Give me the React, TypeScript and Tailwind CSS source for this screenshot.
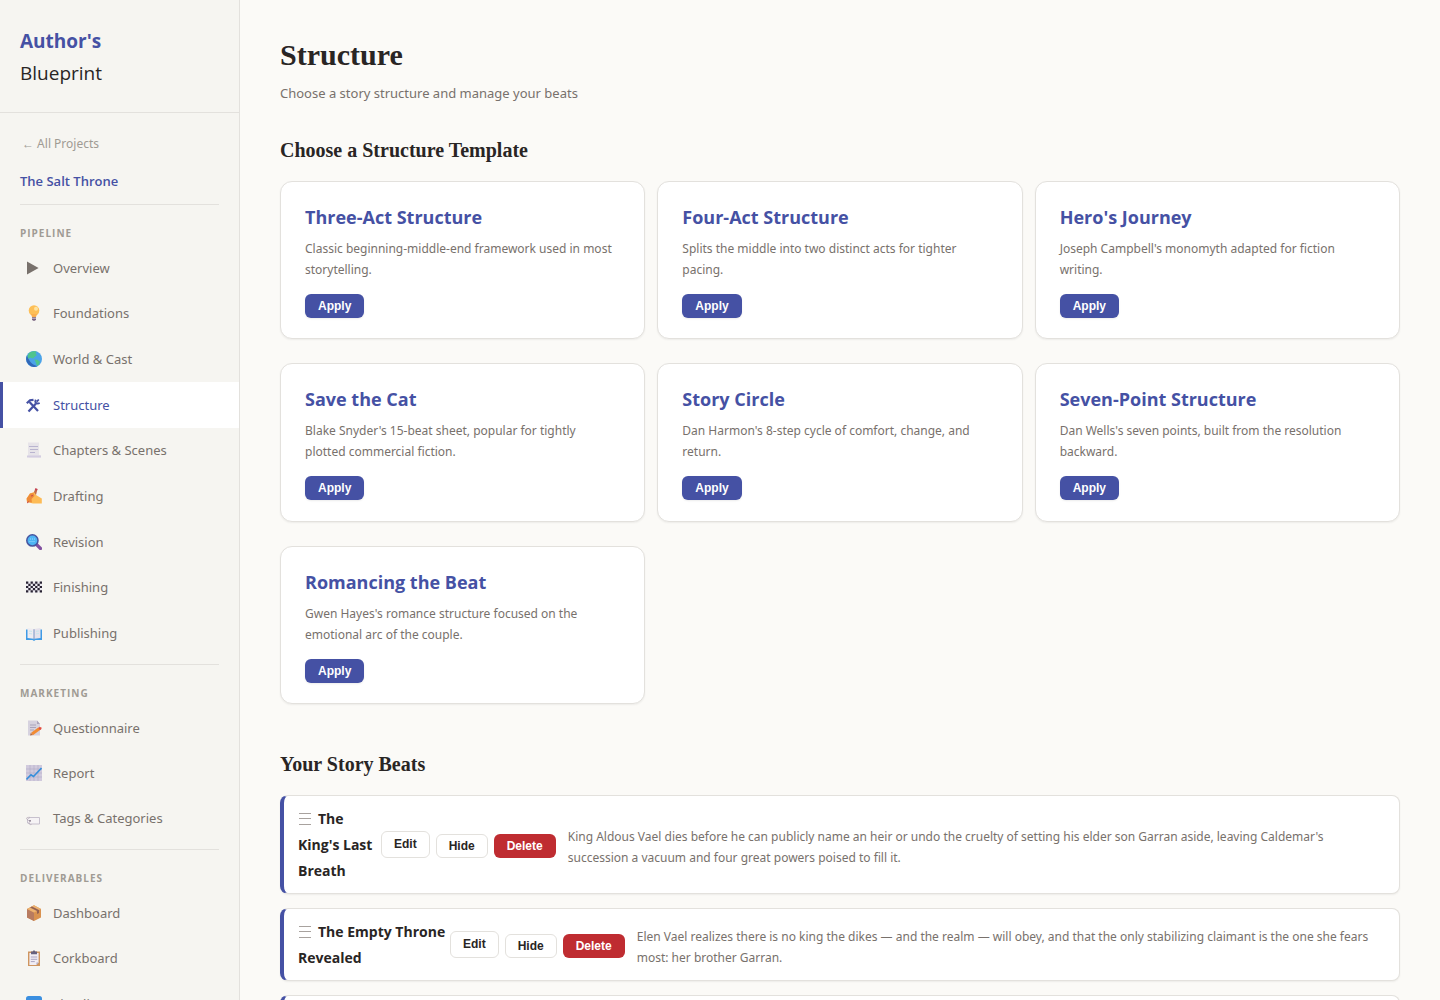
import type { ReactNode } from 'react';
import clsx from 'clsx';

type NavItem = { label: string; icon: ReactNode; active?: boolean };

const icons = {
  play: <path d="M1 1.6v12.8L12.6 8z" fill="#78716c" />,
  bulb: (
    <>
      <circle cx="8" cy="5.6" r="5.3" fill="#fdbf57" />
      <path d="M5 9h6l-1.200 3.500H6.200z" fill="#fbb050" />
      <circle cx="10" cy="3.800" r="2" fill="#ffe3a0" />
      <path d="M6 12.300h4v2.200l-1 1.200H7l-1-1.200z" fill="#7a6480" />
      <path d="M6 13.500h4" stroke="#cdbfd3" strokeWidth=".7" />
    </>
  ),
  globe: (
    <>
      <circle cx="8" cy="8" r="8" fill="#4ba3e8" />
      <path d="M1 4.500A8 8 0 0 0 11.500 15.200C6 14 3 10 1 4.500z" fill="#3268b8" />
      <path d="M3 2C5 .4 8-.2 10.500.5L9.500 3l1.500 1-2.500 2L7 7.500 4 6.500 2.500 8 1.500 5z" fill="#4fc48d" />
      <path d="M8.500 8.500l3 .3 2.500 2-1 2.700-2 1.500-1-3z" fill="#4fc48d" />
    </>
  ),
  tools: (
    <g fill="none" stroke="#4551a4">
      <path d="M3.500 5l8.500 9" strokeWidth="2.200" />
      <path d="M.8 6.300L4 3.200l3.500-.4" strokeWidth="2.200" />
      <path d="M2.500 14.500l7.500-8" strokeWidth="2.200" />
      <path d="M9.700 2.600c-1.300 2.400.8 5 4 3.400M12.800 2.500l-2 2.200" strokeWidth="1.800" />
    </g>
  ),
  page: (
    <>
      <path d="M2 .5h11v12.500l2 .5v2H3l-1-2z" fill="#e7e4e9" />
      <path d="M1 13.500h14v2H1z" fill="#d3cde1" />
      <path d="M3 4.500h9M4 7.500h8M4 10.500h5" stroke="#b9b4cf" strokeWidth="1.200" />
    </>
  ),
  writing: (
    <>
      <path d="M7 6l2.500-5.500 2 .6L10 7z" fill="#c46a48" />
      <path d="M9.300.2l2.200.8-.5 1.500-2.200-.8z" fill="#c43f55" />
      <path d="M1 14l-.5-3.500L4 5.500 8 4l2 3 5.800 3.500V15.500H7z" fill="#fdbb55" />
      <path d="M1 14l-.3-3.500L4 5.500 7.500 5 8.500 8l-3 3 .5 3.500z" fill="#ee8b39" />
      <path d="M1 15l2-1.500M5 8l2-.5" stroke="#c64a4f" strokeWidth="1" />
    </>
  ),
  search: (
    <>
      <path d="M10.500 10.500l4 4" stroke="#8250a0" strokeWidth="3.200" strokeLinecap="round" />
      <circle cx="6.400" cy="6.400" r="5.600" fill="#4eb4f3" stroke="#47549f" strokeWidth="1.500" />
      <path d="M4 5h5M3.500 7.500h5" stroke="#9bd9ff" strokeWidth="1" strokeDasharray="1 1" />
    </>
  ),
  checker: (
    <>
      <path d="M0 2.500h16v11H0z" fill="#eceaf0" />
      <path
        d="M0 3.600h16M0 8h16M0 12.400h16"
        stroke="#292333"
        strokeWidth="2.200"
        strokeDasharray="2.300 2.267"
      />
      <path
        d="M2.300 5.800H16M2.300 10.200H16"
        stroke="#292333"
        strokeWidth="2.200"
        strokeDasharray="2.300 2.267"
      />
    </>
  ),
  book: (
    <>
      <path d="M0 4.500h16v10.500H9.500l-1.500 1-1.500-1H0z" fill="#3f9be6" />
      <path d="M1.500 3L7.700 4v9.800l-6.200-.7z" fill="#efecf1" />
      <path d="M14.500 3L8.300 4v9.800l6.200-.7z" fill="#e6e2ec" />
      <path d="M3 6l3 .4M3 8.500l3 .4M10 6.400l3-.4M10 8.900l3-.4" stroke="#c3e6ec" strokeWidth=".9" />
      <path d="M8 4v10.500" stroke="#aaa3be" strokeWidth=".8" />
    </>
  ),
  memo: (
    <>
      <path d="M2 .5h9l3 3.500v11.500H2z" fill="#d6d2df" />
      <path d="M11 .5V4h3z" fill="#aaa4bb" />
      <path d="M4 5h6M4 7.500h6M4 10h4" stroke="#aaa4bb" strokeWidth="1" />
      <path d="M6 14l7.500-5.500" stroke="#f28b32" strokeWidth="3" />
      <path d="M13.500 6.800l2.300 1-1 2.200-2.300-1z" fill="#e34e42" />
      <path d="M4 15.500l.8-2.800 2 2.200z" fill="#b76e43" />
    </>
  ),
  chart: (
    <>
      <path d="M0 0h16v16H0z" fill="#d1cadd" />
      <path d="M4 0v16M8 0v16M12 0v16M0 4h16M0 8h16M0 12h16" stroke="#b4abc7" strokeWidth=".6" />
      <path d="M.5 14.500L5 9.800l2.500 1.700L15.500 3" fill="none" stroke="#368edb" strokeWidth="1.600" />
    </>
  ),
  tag: (
    <>
      <path d="M4 7.500h9.500v6.500h-9L1.500 13V9z" fill="#f6f3f5" stroke="#c2bbc8" strokeWidth=".9" />
      <circle cx="4" cy="10.800" r=".9" fill="#756779" />
      <path d="M3.500 11c-4-2-4-4 .5-3.600M3 12c0 2 .6 3 2.500 2.500" fill="none" stroke="#afa3b3" strokeWidth=".7" />
    </>
  ),
  box: (
    <>
      <path d="M1 4l7-3.700L15 4v8.500L8 16l-7-3.500z" fill="#d99250" />
      <path d="M1 4l7 3.500V16l-7-3.500z" fill="#b87b60" />
      <path d="M1 4l7-3.700L15 4 8 7.500z" fill="#edb270" />
      <path d="M4 2.500l7 3.500v3l2-1V5L6 1.500z" fill="#936052" />
    </>
  ),
  clipboard: (
    <>
      <path d="M2 1.500h12V16H2z" fill="#cf955f" />
      <path d="M3.400 3h9.200v9.500L10.500 15H3.400z" fill="#f1edf4" />
      <path d="M12.600 12.500L10.500 15v-2.500z" fill="#a99fb8" />
      <path d="M5 1.500h1.700L8 0l1.300 1.500H11v2.700H5z" fill="#66617e" />
      <path d="M4.800 7h6.400M4.800 9.300h6.400M4.800 11.600h4" stroke="#aaa4c1" strokeWidth="1" />
    </>
  ),
  calendar: (
    <>
      <rect width="16" height="16" rx="2.500" fill="#3b8fe0" />
      <path d="M0 8h16" stroke="#3767bd" strokeWidth="2" />
    </>
  ),
};

const pipeline: NavItem[] = [
  { label: 'Overview', icon: icons.play },
  { label: 'Foundations', icon: icons.bulb },
  { label: 'World & Cast', icon: icons.globe },
  { label: 'Structure', icon: icons.tools, active: true },
  { label: 'Chapters & Scenes', icon: icons.page },
  { label: 'Drafting', icon: icons.writing },
  { label: 'Revision', icon: icons.search },
  { label: 'Finishing', icon: icons.checker },
  { label: 'Publishing', icon: icons.book },
];

const marketing: NavItem[] = [
  { label: 'Questionnaire', icon: icons.memo },
  { label: 'Report', icon: icons.chart },
  { label: 'Tags & Categories', icon: icons.tag },
];

const deliverables: NavItem[] = [
  { label: 'Dashboard', icon: icons.box },
  { label: 'Corkboard', icon: icons.clipboard },
  { label: 'Timeline', icon: icons.calendar },
];

const templates = [
  {
    name: 'Three-Act Structure',
    description: 'Classic beginning-middle-end framework used in most storytelling.',
  },
  {
    name: 'Four-Act Structure',
    description: 'Splits the middle into two distinct acts for tighter pacing.',
  },
  {
    name: "Hero's Journey",
    description: "Joseph Campbell's monomyth adapted for fiction writing.",
  },
  {
    name: 'Save the Cat',
    description: "Blake Snyder's 15-beat sheet, popular for tightly plotted commercial fiction.",
  },
  {
    name: 'Story Circle',
    description: "Dan Harmon's 8-step cycle of comfort, change, and return.",
  },
  {
    name: 'Seven-Point Structure',
    description: "Dan Wells's seven points, built from the resolution backward.",
  },
  {
    name: 'Romancing the Beat',
    description: "Gwen Hayes's romance structure focused on the emotional arc of the couple.",
  },
];

const beats = [
  {
    title: "The King's Last Breath",
    width: 'w-[83px]',
    description:
      "King Aldous Vael dies before he can publicly name an heir or undo the cruelty of setting his elder son Garran aside, leaving Caldemar's succession a vacuum and four great powers poised to fill it.",
  },
  {
    title: 'The Empty Throne Revealed',
    width: 'w-[152px]',
    description:
      'Elen Vael realizes there is no king the dikes — and the realm — will obey, and that the only stabilizing claimant is the one she fears most: her brother Garran.',
  },
  {
    title: 'Garran Returns',
    width: 'w-[152px]',
    description: 'Garran Vael comes home to Caldemar.',
  },
];

function NavSection({ title, items, className }: { title: string; items: NavItem[]; className?: string }) {
  return (
    <section>
      <h2 className="px-5 pt-5 pb-1 text-[10px] leading-4 font-bold tracking-[1px] text-[#a09b94] uppercase">
        {title}
      </h2>
      <ul className={clsx('grid auto-rows-fr', className)}>
        {items.map((item) => (
          <li key={item.label} className="flex">
            <a
              href="#"
              aria-current={item.active ? 'page' : undefined}
              className={clsx(
                "flex flex-1 items-center gap-[11px] border-l-3 py-3 pl-[23px] font-['Noto_Sans',sans-serif] text-[13px] leading-5",
                item.active ? 'border-[#4551a4] bg-white text-[#4551a4]' : 'border-transparent text-[#78716c]'
              )}
            >
              <svg viewBox="0 0 16 16" className="size-4 shrink-0" aria-hidden="true">
                {item.icon}
              </svg>
              {item.label}
            </a>
          </li>
        ))}
      </ul>
    </section>
  );
}

function Divider({ className }: { className: string }) {
  return <hr className={clsx('mx-5 border-[#e3e1dd]', className)} />;
}

function Sidebar() {
  return (
    <aside className="sticky top-0 h-screen w-60 shrink-0 overflow-y-auto border-r border-[#e3e1dd] bg-[#f6f5f1] [scrollbar-width:none]">
      <div className="border-b border-[#e3e1dd] px-5 pt-[25px] pb-[23px] text-[19px] leading-8">
        <div className="font-bold text-[#4551a4]">Author's</div>
        <div className="text-[#292524]">Blueprint</div>
      </div>
      <nav>
        <a
          href="#"
          className="mt-[21px] ml-[22px] block font-['Noto_Sans',sans-serif] text-[12px] leading-5 text-[#a09b94]"
        >
          ← All Projects
        </a>
        <a href="#" className="mt-[17px] ml-5 block text-[13px] leading-5 font-semibold text-[#4551a4]">
          The Salt Throne
        </a>
        <Divider className="mt-[13px]" />
        <NavSection title="Pipeline" items={pipeline} className="min-h-[411px]" />
        <Divider className="mt-2" />
        <NavSection title="Marketing" items={marketing} className="min-h-[136px]" />
        <Divider className="mt-2" />
        <NavSection title="Deliverables" items={deliverables} className="min-h-[137px]" />
      </nav>
    </aside>
  );
}

function TemplateCard({ name, description }: { name: string; description: string }) {
  return (
    <article className="rounded-xl border border-[#e3e1dd] bg-white px-6 py-5 shadow-[0_1px_2px_rgba(0,0,0,0.06)]">
      <h3 className="mb-[6px] text-[18px] leading-[30px] font-bold text-[#4551a4]">{name}</h3>
      <p className="pr-1 font-['Noto_Sans',sans-serif] text-[12px] leading-[21px] text-[#78716c]">{description}</p>
      <button
        type="button"
        className="mt-[14px] block h-6 rounded-md bg-[#4551a4] px-[13px] font-['Liberation_Sans',sans-serif] text-[12px] font-semibold text-white shadow-[0_1px_2px_rgba(0,0,0,0.08)]"
      >
        Apply
      </button>
    </article>
  );
}

function BeatCard({ title, width, description }: { title: string; width: string; description: string }) {
  return (
    <li className="flex items-center rounded-lg border border-l-4 border-[#e3e1dd] border-l-[#4551a4] bg-white pt-[10px] pr-3 pb-[9px] pl-[14px] shadow-[0_1px_2px_rgba(0,0,0,0.06)]">
      <h3 className={clsx('shrink-0 text-[14px] leading-[26px] font-bold text-[#292524]', width)}>
        <svg viewBox="0 0 14 12" className="mr-[6px] inline-block h-3 w-[14px] align-[-1px]" aria-hidden="true">
          <path d="M1 .5h12M1 5.500h12M1 11.500h12" stroke="#a8a29e" />
        </svg>
        {title}
      </h3>
      <div className="mb-[2px] flex shrink-0 items-end gap-[6px] font-['Liberation_Sans',sans-serif] text-[12px] font-semibold">
        <a href="#" className="flex h-[27px] items-center rounded-md border border-[#e3e1dd] px-3 text-[#292524]">
          Edit
        </a>
        <button type="button" className="h-6 rounded-md border border-[#e3e1dd] px-3 text-[#292524]">
          Hide
        </button>
        <button type="button" className="h-6 rounded-md bg-[#bf2c31] px-[13px] text-white">
          Delete
        </button>
      </div>
      <p className="mt-[3px] ml-3 flex-1 font-['Noto_Sans',sans-serif] text-[12px] leading-[21px] text-[#78716c]">
        {description}
      </p>
    </li>
  );
}

export default function App() {
  return (
    <div className="flex min-h-screen items-start bg-[#fbfaf7] font-['Open_Sans','Noto_Sans',sans-serif]">
      <Sidebar />
      <main className="min-w-0 flex-1 px-10 pt-[35px] pb-10">
        <h1 className="font-['Liberation_Serif',serif] text-[30px] leading-10 font-bold text-[#292524]">Structure</h1>
        <p className="mt-[6px] font-['Noto_Sans',sans-serif] text-[13px] leading-6 text-[#78716c]">
          Choose a story structure and manage your beats
        </p>

        <h2 className="mt-8 mb-[18px] font-['Liberation_Serif',serif] text-[20px] leading-[26px] font-bold text-[#292524]">
          Choose a Structure Template
        </h2>
        <div className="grid min-h-[523px] auto-rows-fr grid-cols-3 gap-x-3 gap-y-6">
          {templates.map((template) => (
            <TemplateCard key={template.name} {...template} />
          ))}
        </div>

        <h2 className="mt-[47px] mb-[18px] font-['Liberation_Serif',serif] text-[20px] leading-[26px] font-bold text-[#292524]">
          Your Story Beats
        </h2>
        <ul className="flex flex-col gap-[14px]">
          {beats.map((beat) => (
            <BeatCard key={beat.title} {...beat} />
          ))}
        </ul>
      </main>
    </div>
  );
}
